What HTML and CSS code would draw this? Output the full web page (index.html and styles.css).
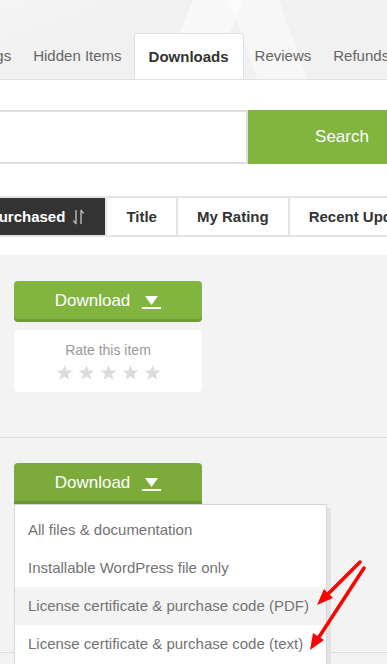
FILE: index.html
```html
<!DOCTYPE html>
<html lang="en">
<head>
    <meta charset="UTF-8">
    <meta name="viewport" content="width=device-width, initial-scale=1.0">
    <title>Downloads</title>
    <link rel="stylesheet" href="styles.css">
</head>
<body>
    <div class="page">
        <header class="hero">
            <nav class="tabs">
                <a class="tab">Settings</a>
                <a class="tab">Hidden Items</a>
                <a class="tab active">Downloads</a>
                <a class="tab">Reviews</a>
                <a class="tab">Refunds</a>
            </nav>
        </header>

        <section class="search">
            <form class="search-form">
                <input class="search-input" type="text">
                <button class="search-button" type="button">Search</button>
            </form>
        </section>

        <div class="sort-bar">
            <div class="sort-cell current">
                <span>Date Purchased</span>
                <svg class="sort-icon" width="11" height="16" viewBox="0 0 11 16">
                    <path d="M3 1 V15 M0.5 11.5 L3 15" stroke="#a9a9a9" stroke-width="1.6" fill="none"/>
                    <path d="M8 15 V1 M8 1 L10.5 4.5" stroke="#a9a9a9" stroke-width="1.6" fill="none"/>
                </svg>
            </div>
            <div class="sort-cell">Title</div>
            <div class="sort-cell">My Rating</div>
            <div class="sort-cell">Recent Updates</div>
        </div>

        <main class="items">
            <div class="item">
                <button class="download-btn" type="button">
                    <span>Download</span>
                    <svg width="19" height="14" viewBox="0 0 19 14">
                        <polygon points="3,1 16,1 9.5,10" fill="#fff"/>
                        <rect x="0" y="12" width="19" height="2" fill="#fff"/>
                    </svg>
                </button>
                <div class="rate-box">
                    <p>Rate this item</p>
                    <div class="stars">
                        <svg class="star" viewBox="0 0 24 24"><polygon points="12,1.5 15,9 23,9.3 16.8,14.4 19,22.3 12,17.8 5,22.3 7.2,14.4 1,9.3 9,9"/></svg>
                        <svg class="star" viewBox="0 0 24 24"><polygon points="12,1.5 15,9 23,9.3 16.8,14.4 19,22.3 12,17.8 5,22.3 7.2,14.4 1,9.3 9,9"/></svg>
                        <svg class="star" viewBox="0 0 24 24"><polygon points="12,1.5 15,9 23,9.3 16.8,14.4 19,22.3 12,17.8 5,22.3 7.2,14.4 1,9.3 9,9"/></svg>
                        <svg class="star" viewBox="0 0 24 24"><polygon points="12,1.5 15,9 23,9.3 16.8,14.4 19,22.3 12,17.8 5,22.3 7.2,14.4 1,9.3 9,9"/></svg>
                        <svg class="star" viewBox="0 0 24 24"><polygon points="12,1.5 15,9 23,9.3 16.8,14.4 19,22.3 12,17.8 5,22.3 7.2,14.4 1,9.3 9,9"/></svg>
                    </div>
                </div>
            </div>

            <div class="item tall">
                <button class="download-btn open" type="button">
                    <span>Download</span>
                    <svg width="19" height="14" viewBox="0 0 19 14">
                        <polygon points="3,1 16,1 9.5,10" fill="#fff"/>
                        <rect x="0" y="12" width="19" height="2" fill="#fff"/>
                    </svg>
                </button>
                <ul class="dropdown">
                    <li>All files &amp; documentation</li>
                    <li>Installable WordPress file only</li>
                    <li class="hover">License certificate &amp; purchase code (PDF)</li>
                    <li>License certificate &amp; purchase code (text)</li>
                </ul>
            </div>

            <div class="item"></div>
        </main>

        <svg class="arrows" width="387" height="664" viewBox="0 0 387 664">
            <path d="M360 562 L328 594" stroke="#f00" stroke-width="3.5" stroke-linecap="round"/>
            <polygon points="317,605 333,598 324,589" fill="#f00"/>
            <path d="M364 568 L319 637" stroke="#f00" stroke-width="3.5" stroke-linecap="round"/>
            <polygon points="310,650 324,640 313,633" fill="#f00"/>
        </svg>
    </div>
</body>
</html>
```

FILE: styles.css
```css
* {
    margin: 0;
    padding: 0;
    box-sizing: border-box;
}

body {
    font-family: "Liberation Sans", Arial, sans-serif;
    background: #fff;
    color: #333;
    overflow: hidden;
}

.page {
    position: relative;
    width: 387px;
    height: 664px;
    overflow: hidden;
}

/* top band with tabs */
.hero {
    height: 80px;
    padding-top: 33px;
    border-bottom: 1px solid #dde2e8;
    background:
        linear-gradient(112deg, transparent 46%, rgba(255, 255, 255, 0.55) 46%, rgba(255, 255, 255, 0.55) 58%, transparent 58%),
        linear-gradient(70deg, transparent 62%, rgba(255, 255, 255, 0.45) 62%, rgba(255, 255, 255, 0.45) 74%, transparent 74%),
        linear-gradient(160deg, rgba(255, 255, 255, 0.3) 0%, transparent 30%),
        #f1f1f1;
}

.tabs {
    display: flex;
    height: 46px;
    margin-left: -54px;
}

.tab {
    display: flex;
    flex-shrink: 0;
    align-items: center;
    padding: 0 11px 1px;
    font-size: 15px;
    color: #666;
    white-space: nowrap;
}

.tab.active {
    margin-left: 1px;
    padding: 0 14px 1px;
    background: #fff;
    border: 1px solid #dde2e8;
    border-bottom: none;
    border-radius: 3px 3px 0 0;
    font-weight: bold;
    color: #333;
}

/* search */
.search {
    padding-top: 30px;
}

.search-form {
    display: flex;
    height: 54px;
    margin-left: -40px;
}

.search-input {
    flex-shrink: 0;
    width: 288px;
    height: 54px;
    border: 2px solid #dedede;
    background: #fff;
    outline: none;
}

.search-button {
    flex-shrink: 0;
    width: 188px;
    height: 54px;
    border: none;
    background: #82b440;
    color: #fff;
    font-family: inherit;
    font-size: 17px;
    padding-bottom: 1px;
}

/* sort bar */
.sort-bar {
    display: flex;
    margin-top: 32px;
    margin-left: -69px;
    height: 41px;
    border-top: 2px solid #e4e4e4;
    border-bottom: 2px solid #e4e4e4;
    white-space: nowrap;
}

.sort-cell {
    display: flex;
    flex-shrink: 0;
    align-items: center;
    padding: 0 19px;
    font-size: 15px;
    font-weight: bold;
    color: #333;
    background: #fff;
    border-right: 2px solid #e4e4e4;
}

.sort-cell.current {
    padding: 0 21px;
    background: #333;
    color: #fff;
    gap: 8px;
}

.sort-icon {
    margin-top: 1px;
}

/* items */
.items {
    margin-top: 18px;
    background: #f3f3f3;
}

.item {
    position: relative;
    height: 183px;
    padding: 26px 14px 0;
    border-bottom: 1px solid #ddd;
}

.item.tall {
    height: 215px;
    padding-top: 25px;
}

.download-btn {
    display: flex;
    align-items: center;
    justify-content: center;
    gap: 12px;
    width: 188px;
    height: 41px;
    padding-top: 1px;
    border: none;
    border-bottom: 3px solid #6f9a36;
    border-radius: 4px;
    background: #82b440;
    color: #fff;
    font-family: inherit;
    font-size: 17px;
}

.download-btn svg {
    margin-top: 2px;
}

.download-btn.open {
    background: #7caa3b;
    border-bottom-color: #6b9534;
    border-radius: 4px 4px 0 0;
}

.rate-box {
    width: 188px;
    height: 62px;
    margin-top: 8px;
    padding-top: 12px;
    border-radius: 4px;
    background: #fff;
    text-align: center;
}

.rate-box p {
    font-size: 14px;
    color: #999;
}

.stars {
    display: flex;
    justify-content: center;
    gap: 5px;
    margin-top: 6px;
}

.star {
    width: 17px;
    height: 17px;
    fill: #dcdcdc;
}

/* dropdown menu */
.dropdown {
    position: absolute;
    left: 14px;
    top: 66px;
    width: 313px;
    height: 170px;
    padding-top: 6px;
    list-style: none;
    background: #fff;
    border: 1px solid #d6d6d6;
    box-shadow: 4px 4px 0 #e3e3e3;
    z-index: 2;
}

.dropdown li {
    height: 38px;
    line-height: 38px;
    padding-left: 13px;
    font-size: 15px;
    color: #737373;
    white-space: nowrap;
}

.dropdown li.hover {
    background: #f3f3f3;
}

/* annotation overlay */
.arrows {
    position: absolute;
    left: 0;
    top: 0;
    z-index: 3;
    pointer-events: none;
}
```
